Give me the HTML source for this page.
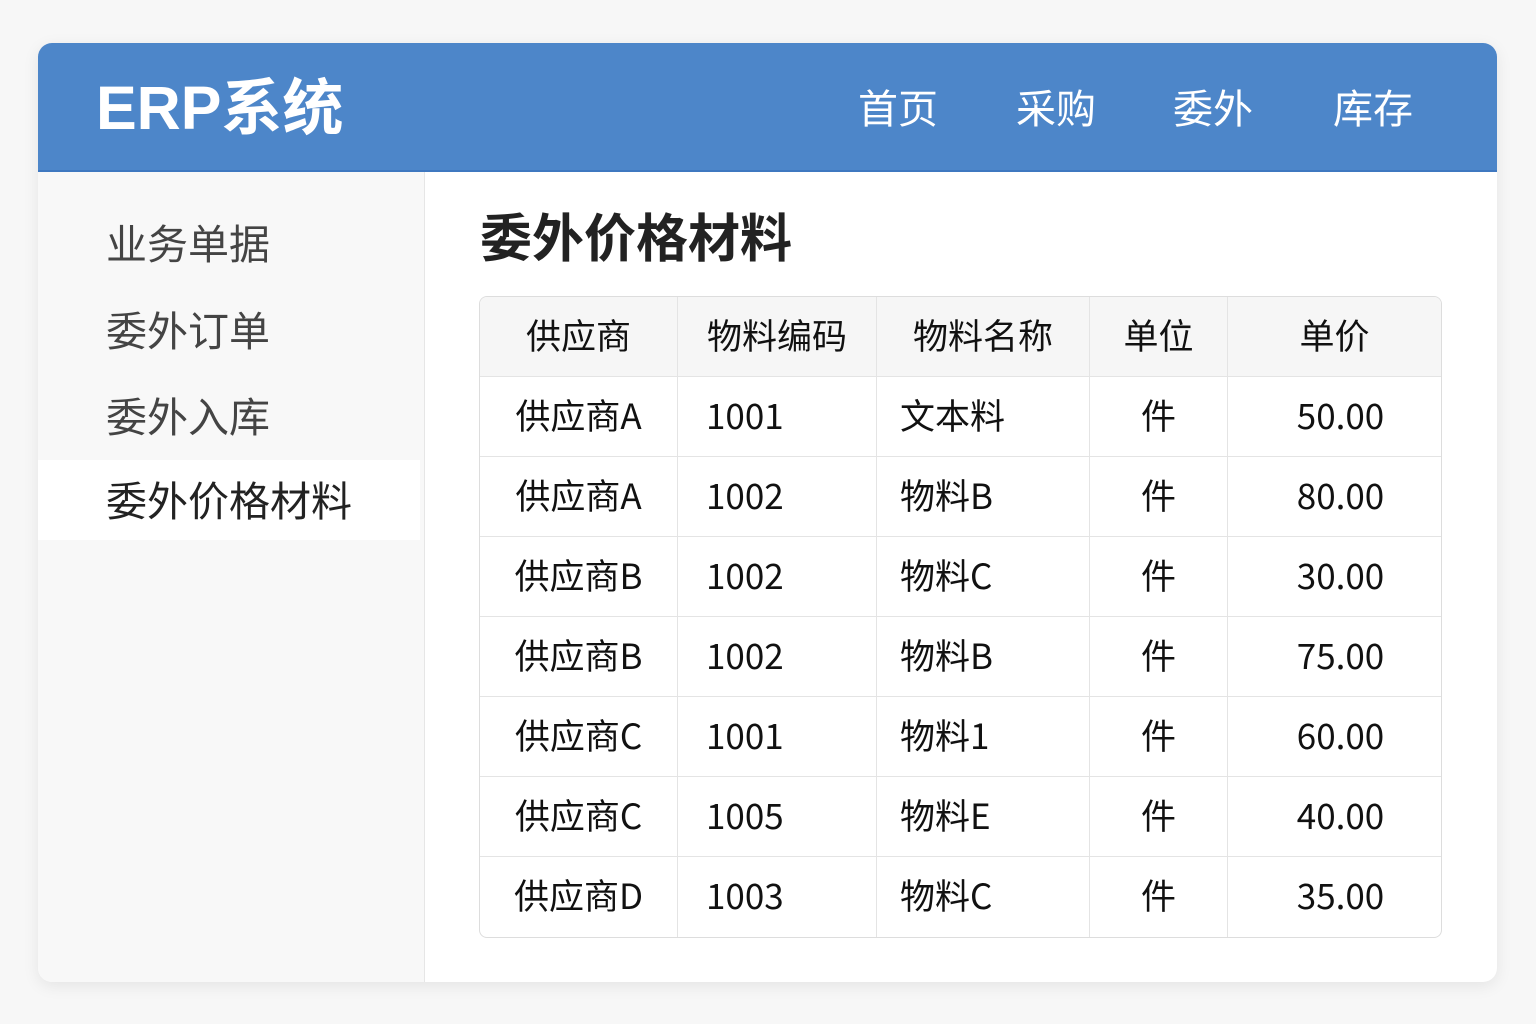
<!DOCTYPE html>
<html><head><meta charset="utf-8"><style>
*{margin:0;padding:0;box-sizing:border-box}
body{width:1536px;height:1024px;background:#f7f7f7;font-family:"Liberation Sans","Noto Sans CJK SC",sans-serif;position:relative;overflow:hidden}
.card{position:absolute;left:38px;top:43px;width:1459px;height:939px;background:#fff;border-radius:14px;overflow:hidden;box-shadow:0 4px 16px rgba(0,0,0,.08)}
.hdr{position:absolute;left:0;top:0;width:100%;height:129px;background:#4d86c9;border-bottom:2px solid #3f78c0}
.logo{position:absolute;left:58px;top:30px;color:#fff;font-size:61px;font-weight:bold;line-height:70px}
.nav{position:absolute;top:38px;color:#fff;font-size:40px;line-height:50px;font-family:"Noto Sans CJK SC",sans-serif}
.side{position:absolute;left:0;top:129px;width:387px;height:810px;background:#f8f8f8;border-right:1px solid #e6e6e6}
.si{position:absolute;left:68px;font-size:41px;color:#444;line-height:50px;font-family:"Noto Sans CJK SC",sans-serif}
.act{position:absolute;left:0;top:288px;width:382px;height:80px;background:#fff}
.title{position:absolute;left:442px;top:162px;font-size:52px;font-weight:bold;color:#222;line-height:60px;font-family:"Noto Sans CJK SC",sans-serif}
table{position:absolute;left:441px;top:253px;width:963px;border-collapse:separate;border-spacing:0;border:1px solid #ddd;border-radius:8px;overflow:hidden;font-size:35px;color:#111;font-family:"Noto Sans CJK SC",sans-serif}
td,th{height:80px;border-right:1px solid #e4e4e4;border-bottom:1px solid #e4e4e4;font-weight:normal;text-align:center;line-height:40px;padding-bottom:4px}
th{background:#f6f6f6}
td:last-child,th:last-child{border-right:none}
tr:last-child td{border-bottom:none}
.l1{text-align:left;padding-left:28px}.l2{text-align:left;padding-left:23px}
td:last-child{padding-left:12px}
</style></head><body>
<div class="card">
<div class="hdr">
<div class="logo">ERP系统</div>
<div class="nav" style="left:820px">首页</div>
<div class="nav" style="left:978px">采购</div>
<div class="nav" style="left:1135px">委外</div>
<div class="nav" style="left:1295px">库存</div>
</div>
<div class="side">
<div class="act"></div>
<div class="si" style="top:44px">业务单据</div>
<div class="si" style="top:131px">委外订单</div>
<div class="si" style="top:217px">委外入库</div>
<div class="si" style="top:301px;color:#222">委外价格材料</div>
</div>
<div class="title">委外价格材料</div>
<table>
<tr><th style="width:198px">供应商</th><th style="width:199px">物料编码</th><th style="width:213px">物料名称</th><th style="width:138px">单位</th><th>单价</th></tr>
<tr><td>供应商A</td><td class="l1">1001</td><td class="l2">文本料</td><td>件</td><td>50.00</td></tr>
<tr><td>供应商A</td><td class="l1">1002</td><td class="l2">物料B</td><td>件</td><td>80.00</td></tr>
<tr><td>供应商B</td><td class="l1">1002</td><td class="l2">物料C</td><td>件</td><td>30.00</td></tr>
<tr><td>供应商B</td><td class="l1">1002</td><td class="l2">物料B</td><td>件</td><td>75.00</td></tr>
<tr><td>供应商C</td><td class="l1">1001</td><td class="l2">物料1</td><td>件</td><td>60.00</td></tr>
<tr><td>供应商C</td><td class="l1">1005</td><td class="l2">物料E</td><td>件</td><td>40.00</td></tr>
<tr><td>供应商D</td><td class="l1">1003</td><td class="l2">物料C</td><td>件</td><td>35.00</td></tr>
</table>
</div>
</body></html>
